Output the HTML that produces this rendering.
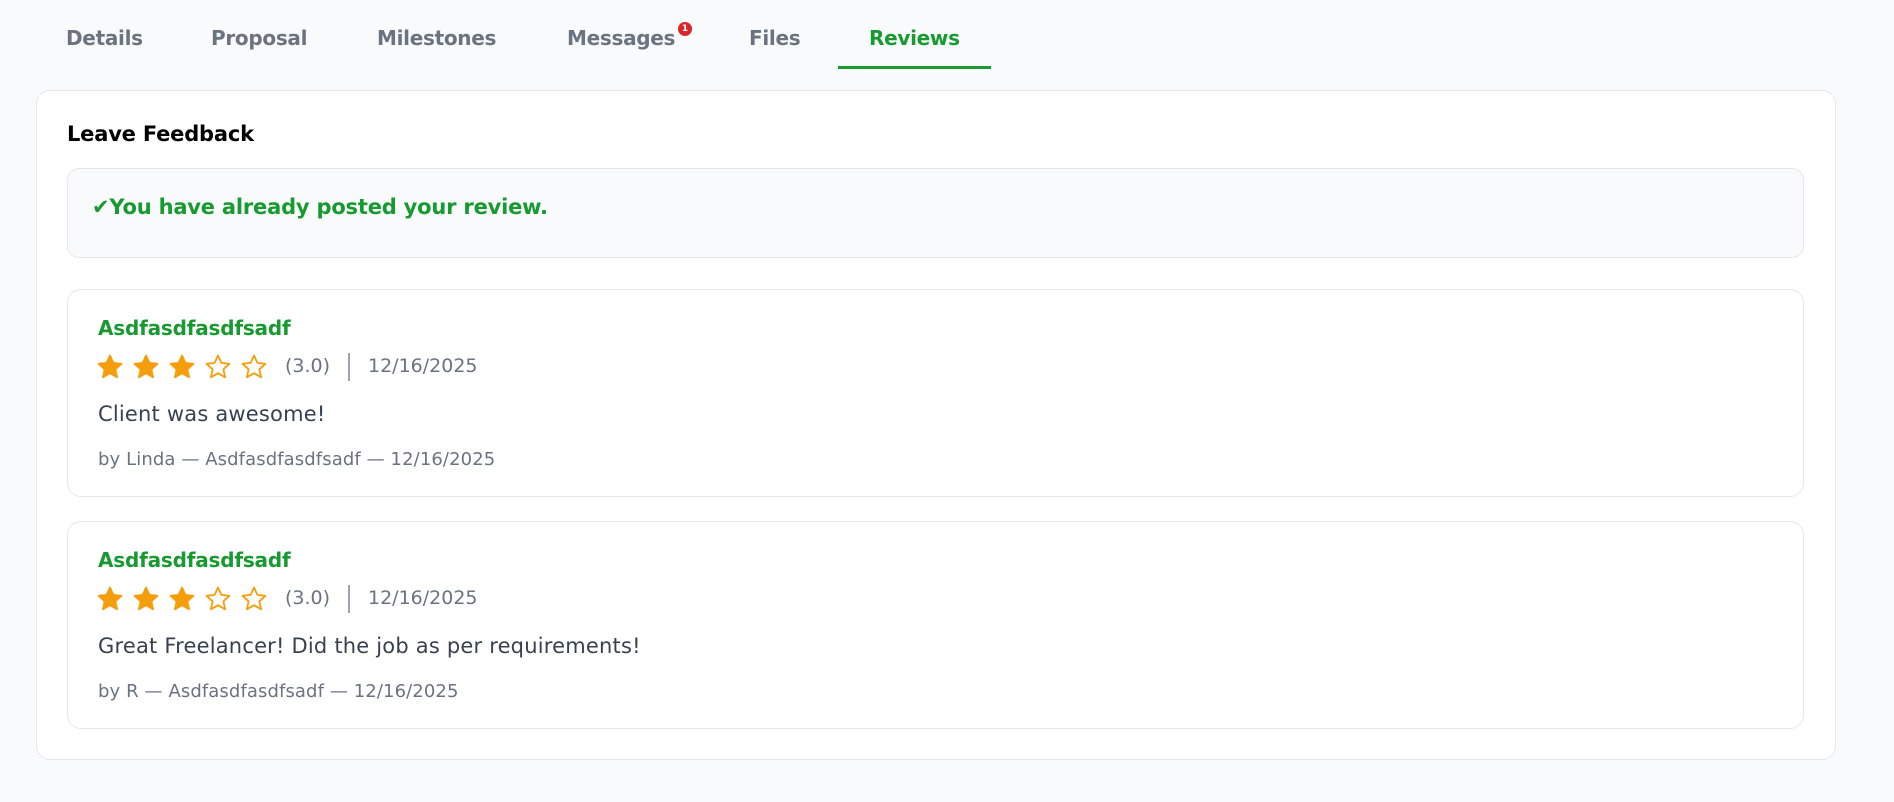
<!DOCTYPE html>
<html><head><meta charset="utf-8"><style>
*{margin:0;padding:0;box-sizing:border-box}
body{width:1894px;height:802px;background:#f8fafc;font-family:"DejaVu Sans","Liberation Sans",sans-serif;position:relative;overflow:hidden}
.a{position:absolute;white-space:nowrap}
.tab{font-size:20px;font-weight:bold;color:#6b7280;top:26px;letter-spacing:-0.3px}
.card{position:absolute;background:#fff;border:1px solid #e5e7eb;border-radius:14px}
.name{color:#179a2f;font-weight:bold;font-size:20px;letter-spacing:-0.2px}
.gray{color:#6b7280}
</style></head><body>
<div class="a tab" style="left:66px">Details</div>
<div class="a tab" style="left:211px">Proposal</div>
<div class="a tab" style="left:377px">Milestones</div>
<div class="a tab" style="left:567px">Messages</div>
<div class="a" style="left:678px;top:22px;width:14px;height:14px;border-radius:7px;background:#dc2626;color:#fff;font-size:9px;font-weight:bold;text-align:center;line-height:14px">1</div>
<div class="a tab" style="left:749px">Files</div>
<div class="a tab" style="left:869px;color:#179a2f">Reviews</div>
<div class="a" style="left:838px;top:66px;width:153px;height:3px;background:#179a2f"></div>

<div class="card" style="left:36px;top:90px;width:1800px;height:670px"></div>
<div class="a" style="left:67px;top:122px;font-size:21px;font-weight:bold;color:#000;letter-spacing:-0.2px">Leave Feedback</div>
<div class="card" style="left:67px;top:168px;width:1737px;height:90px;background:#f8fafc;border-radius:12px"></div>
<div class="a" style="left:92px;top:195px;font-size:21px;font-weight:bold;color:#179a2f;letter-spacing:-0.2px">✔You have already posted your review.</div>

<div class="card" style="left:67px;top:289px;width:1737px;height:208px"></div>
<div class="a name" style="left:98px;top:316px">Asdfasdfasdfsadf</div>
<div class="a" style="left:97px;top:354px"><svg width="175" height="26" viewBox="0 0 175 26">
<g stroke="#f59e0b" stroke-width="1.8" stroke-linejoin="round">
<path d="M13 1.5l3.4 7.4 8 .9-6 5.5 1.7 8-7.1-4.1-7.1 4.1 1.7-8-6-5.5 8-.9z" fill="#f59e0b"/>
<path d="M49 1.5l3.4 7.4 8 .9-6 5.5 1.7 8-7.1-4.1-7.1 4.1 1.7-8-6-5.5 8-.9z" fill="#f59e0b"/>
<path d="M85 1.5l3.4 7.4 8 .9-6 5.5 1.7 8-7.1-4.1-7.1 4.1 1.7-8-6-5.5 8-.9z" fill="#f59e0b"/>
<path d="M121 1.5l3.4 7.4 8 .9-6 5.5 1.7 8-7.1-4.1-7.1 4.1 1.7-8-6-5.5 8-.9z" fill="none"/>
<path d="M157 1.5l3.4 7.4 8 .9-6 5.5 1.7 8-7.1-4.1-7.1 4.1 1.7-8-6-5.5 8-.9z" fill="none"/>
</g></svg></div>
<div class="a gray" style="left:285px;top:355px;font-size:19px">(3.0)</div>
<div class="a" style="left:348px;top:353px;width:2px;height:28px;background:#9ca3af"></div>
<div class="a gray" style="left:368px;top:355px;font-size:19px">12/16/2025</div>
<div class="a" style="left:98px;top:402px;font-size:21px;color:#374151;letter-spacing:0.2px">Client was awesome!</div>
<div class="a gray" style="left:98px;top:449px;font-size:18px;letter-spacing:0.1px">by Linda — Asdfasdfasdfsadf — 12/16/2025</div>

<div class="card" style="left:67px;top:521px;width:1737px;height:208px"></div>
<div class="a name" style="left:98px;top:548px">Asdfasdfasdfsadf</div>
<div class="a" style="left:97px;top:586px"><svg width="175" height="26" viewBox="0 0 175 26">
<g stroke="#f59e0b" stroke-width="1.8" stroke-linejoin="round">
<path d="M13 1.5l3.4 7.4 8 .9-6 5.5 1.7 8-7.1-4.1-7.1 4.1 1.7-8-6-5.5 8-.9z" fill="#f59e0b"/>
<path d="M49 1.5l3.4 7.4 8 .9-6 5.5 1.7 8-7.1-4.1-7.1 4.1 1.7-8-6-5.5 8-.9z" fill="#f59e0b"/>
<path d="M85 1.5l3.4 7.4 8 .9-6 5.5 1.7 8-7.1-4.1-7.1 4.1 1.7-8-6-5.5 8-.9z" fill="#f59e0b"/>
<path d="M121 1.5l3.4 7.4 8 .9-6 5.5 1.7 8-7.1-4.1-7.1 4.1 1.7-8-6-5.5 8-.9z" fill="none"/>
<path d="M157 1.5l3.4 7.4 8 .9-6 5.5 1.7 8-7.1-4.1-7.1 4.1 1.7-8-6-5.5 8-.9z" fill="none"/>
</g></svg></div>
<div class="a gray" style="left:285px;top:587px;font-size:19px">(3.0)</div>
<div class="a" style="left:348px;top:585px;width:2px;height:28px;background:#9ca3af"></div>
<div class="a gray" style="left:368px;top:587px;font-size:19px">12/16/2025</div>
<div class="a" style="left:98px;top:634px;font-size:21px;color:#374151;letter-spacing:0.2px">Great Freelancer! Did the job as per requirements!</div>
<div class="a gray" style="left:98px;top:681px;font-size:18px;letter-spacing:0.1px">by R — Asdfasdfasdfsadf — 12/16/2025</div>
</body></html>
